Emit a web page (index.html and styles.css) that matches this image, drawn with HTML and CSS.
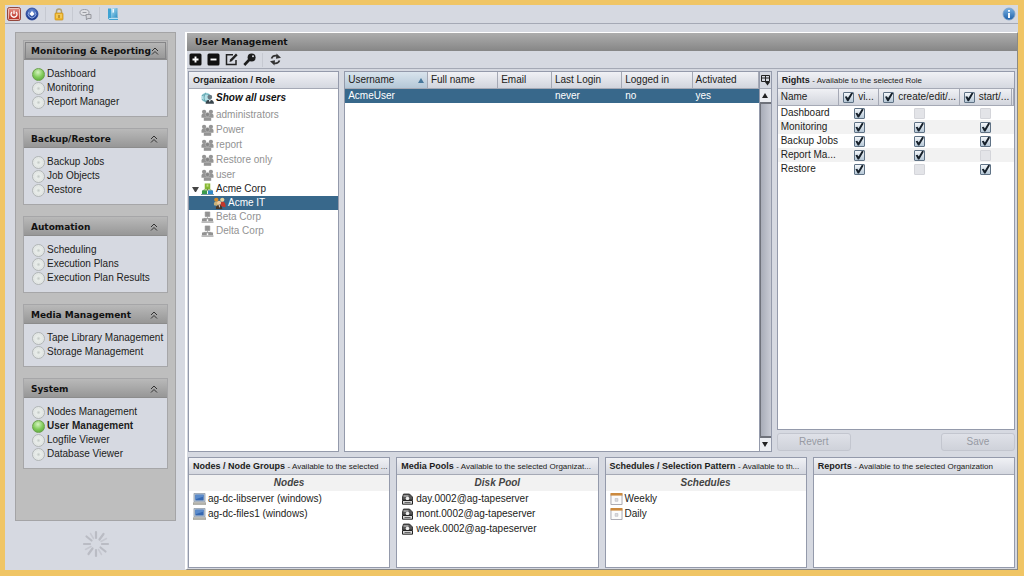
FILE: index.html
```html
<!DOCTYPE html>
<html lang="en">
<head>
<meta charset="utf-8">
<title>User Management</title>
<link rel="stylesheet" href="styles.css">
</head>
<body>
<svg class="defs" aria-hidden="true">
  <defs>
    <linearGradient id="g-red" x1="0" y1="0" x2="0" y2="1"><stop offset="0" stop-color="#e8958a"/><stop offset="1" stop-color="#b3271c"/></linearGradient>
    <radialGradient id="g-blue" cx=".5" cy=".3" r=".7"><stop offset="0" stop-color="#6f93dc"/><stop offset="1" stop-color="#0c2a80"/></radialGradient>
    <linearGradient id="g-info" x1="0" y1="0" x2="0" y2="1"><stop offset="0" stop-color="#79b2e4"/><stop offset="1" stop-color="#1d5fa8"/></linearGradient>
    <linearGradient id="g-book" x1="0" y1="0" x2="1" y2="1"><stop offset="0" stop-color="#b5e2f5"/><stop offset="1" stop-color="#2b8fc4"/></linearGradient>
  </defs>
  <symbol id="i-chevrons" viewBox="0 0 8 8"><path d="M1 4 4 1l3 3M1 7.500l3-3 3 3" fill="none" stroke="#333" stroke-width="1"/></symbol>
  <symbol id="i-group" viewBox="0 0 14 13"><g fill="#949494"><circle cx="3.300" cy="3" r="2.300"/><circle cx="10.700" cy="3" r="2.300"/><path d="M.5 9.500V6.600Q1 4.500 3.300 4.500h7.400q2.300 0 2.800 2.100v2.900z"/><path d="M3 12.800V9.500h8v3.300z"/></g><circle cx="7" cy="6" r="2.300" fill="#868686" stroke="#bdbdbd" stroke-width=".6"/></symbol>
  <symbol id="i-org" viewBox="0 0 14 13"><path d="M4.500 1h5v5h-5zM7 6v2M3 9V8h8v1" fill="currentColor" stroke="currentColor" stroke-width=".7"/><path d="M1 8.200h5.200V11H1zM7.800 8.200H13V11H7.800z" fill="currentColor"/><path d="M.5 12h13" stroke="currentColor" stroke-width="1.200"/></symbol>
  <symbol id="i-org-color" viewBox="0 0 14 13"><path d="M4 .5h6V6.500H4z" fill="#86b834"/><path d="M6 1.500h2v2.500H6z" fill="#c4dd83"/><path d="M7 6v2M3 9V7.500h8V9" stroke="#67922b" fill="none"/><path d="M1 8h5.500v4H1z" fill="#3c9b4c"/><path d="M7.500 8H13v4H7.500z" fill="#3187c8"/><path d="M0 12.500h14" stroke="#668c9a"/></symbol>
  <symbol id="i-pc" viewBox="0 0 14 13"><path d="M1 .5h12v9H1z" fill="#bfc9d3" stroke="#8a97a5" stroke-width=".8"/><path d="M2.500 1.800h9v6.300h-9z" fill="#3568b2"/><path d="M2.500 1.800h9v2l-9 3z" fill="#5b8bcb"/><path d="M0 10.500h14v2H0z" fill="#b9b8ae" stroke="#85857e" stroke-width=".5"/></symbol>
  <symbol id="i-disk" viewBox="0 0 12 12"><path d="M2 1h6l3 3v3H1V4z" fill="#555" stroke="#222" stroke-width=".8"/><path d="M2 3h5" stroke="#ddd"/><circle cx="6" cy="5.500" r="1.800" fill="#eee"/><path d="M1 7.500h10v3.700H1z" fill="#d7d7d7" stroke="#222" stroke-width="1"/><path d="M3 9.500h6" stroke="#666"/></symbol>
  <symbol id="i-cal" viewBox="0 0 13 13"><path d="M.5 1.500h12v11H.5z" fill="#fbfbfb" stroke="#a3a3ad"/><path d="M0 0h13v2.800H0z" fill="#cc8a3f"/><path d="M5 6h3v3H5z" fill="#ddd" stroke="#b4b4c0" stroke-width=".6"/></symbol>
</svg>
<div class="app">
  <header class="topbar">
    <button class="icon-btn" aria-label="Shut down"><svg viewBox="0 0 14 14"><rect x=".5" y=".5" width="13" height="13" rx="2" fill="url(#g-red)" stroke="#93473d"/><rect x="1.500" y="1.500" width="11" height="11" rx="1" fill="none" stroke="#f3cfc8" stroke-width=".8"/><path d="M5 5a3 3 0 1 0 4 0M7 3.500v3.500" fill="none" stroke="#fff" stroke-width="1.300"/></svg></button>
    <button class="icon-btn" aria-label="Log out"><svg viewBox="0 0 14 14"><circle cx="7" cy="7" r="6" fill="url(#g-blue)" stroke="#27459a" stroke-width=".8"/><path d="M4 4.800a3.800 3.800 0 1 0 6 0" fill="none" stroke="#93aee8"/><path d="M7 4 9.600 7 7 9.300 4.400 7z" fill="#fff"/></svg></button>
    <span class="sep"></span>
    <button class="icon-btn" aria-label="Lock"><svg viewBox="0 0 14 14"><path d="M4.500 7V4.500a2.500 2.500 0 0 1 5 0V7" fill="none" stroke="#b1a070" stroke-width="1.500"/><rect x="3" y="6" width="8" height="7" rx=".8" fill="#efb62c" stroke="#c98e17" stroke-width=".7"/><path d="M4 8h6M4 10h6" stroke="#f9d978"/><path d="M7 8v3" stroke="#8e6413"/></svg></button>
    <span class="sep"></span>
    <button class="icon-btn" aria-label="Messages"><svg viewBox="0 0 14 14"><ellipse cx="5.500" cy="5.500" rx="4.500" ry="3" fill="#dfe0e4" stroke="#9a9ca3"/><path d="M3.500 5.500h4" stroke="#9a9ca3"/><path d="M7 7.500h5v4H8.500L7.500 13z" fill="#d2d3d8" stroke="#96989f"/></svg></button>
    <span class="sep"></span>
    <button class="icon-btn" aria-label="Manual"><svg viewBox="0 0 14 14"><path d="M2 1.500h3v9h7v2.500H3.500L2 11.500z" fill="#3fa3d3"/><path d="M5 1.500 11.500 1v9.500H5z" fill="url(#g-book)"/><path d="M6.500 2h1.500v4l-.8-.8-.7.800z" fill="#eef9ff"/><path d="M3 11.500h9" stroke="#d8f0fa" stroke-width=".8"/></svg></button>
    <button class="icon-btn info" aria-label="Information"><svg viewBox="0 0 14 14"><circle cx="7" cy="7" r="6" fill="url(#g-info)" stroke="#7c9fc6" stroke-width=".8"/><path d="M7 6v5M7 3v1.800" stroke="#fff" stroke-width="1.900"/></svg></button>
  </header>

  <div class="workspace">
    <aside class="side">
      <nav class="menu" aria-label="Main">
        <section class="group">
          <button class="group-head focus">Monitoring &amp; Reporting<svg><use href="#i-chevrons"/></svg></button>
          <ul><li><a class="on" href="#">Dashboard</a></li><li><a href="#">Monitoring</a></li><li><a href="#">Report Manager</a></li></ul>
        </section>
        <section class="group">
          <button class="group-head">Backup/Restore<svg><use href="#i-chevrons"/></svg></button>
          <ul><li><a href="#">Backup Jobs</a></li><li><a href="#">Job Objects</a></li><li><a href="#">Restore</a></li></ul>
        </section>
        <section class="group">
          <button class="group-head">Automation<svg><use href="#i-chevrons"/></svg></button>
          <ul><li><a href="#">Scheduling</a></li><li><a href="#">Execution Plans</a></li><li><a href="#">Execution Plan Results</a></li></ul>
        </section>
        <section class="group">
          <button class="group-head">Media Management<svg><use href="#i-chevrons"/></svg></button>
          <ul><li><a href="#">Tape Library Management</a></li><li><a href="#">Storage Management</a></li></ul>
        </section>
        <section class="group">
          <button class="group-head">System<svg><use href="#i-chevrons"/></svg></button>
          <ul><li><a href="#">Nodes Management</a></li><li><a class="on current" href="#">User Management</a></li><li><a href="#">Logfile Viewer</a></li><li><a href="#">Database Viewer</a></li></ul>
        </section>
      </nav>
      <div class="busy"><svg viewBox="-14 -14 28 28" aria-hidden="true"><g stroke="#babcc4" stroke-width="2.200" stroke-linecap="round"><path d="M0-6v-6M0 6v6M6 0h6M-6 0h-6"/><path d="M3.500-4.500 7.500-10M-3.500 4.500-7.500 10M4.500 3.500l5 4M-4.500-3.500l-5-4"/><path d="M5-2.500l5.500-3M-5 2.500l-5.500 3M2.500 5.500l3 5M-2.500-5.500l-3-5" stroke="#c6c8d0" stroke-width="1.500"/></g></svg></div>
    </aside>

    <main class="main">
      <h1>User Management</h1>
      <div class="tools">
        <button class="tool" aria-label="Add"><svg viewBox="0 0 13 13"><rect x=".5" y=".5" width="12" height="12" rx="1.500" fill="#111"/><path d="M6.500 3.500v6M3.500 6.500h6" stroke="#fff" stroke-width="1.900"/></svg></button>
        <button class="tool" aria-label="Remove"><svg viewBox="0 0 13 13"><rect x=".5" y=".5" width="12" height="12" rx="1.500" fill="#111"/><path d="M3.500 6.500h6" stroke="#fff" stroke-width="1.900"/></svg></button>
        <button class="tool" aria-label="Edit"><svg viewBox="0 0 13 13"><path d="M8 1.800H1.500v9.700H11V7" fill="none" stroke="#222" stroke-width="1.500"/><path d="m4.500 9 .6-2.400L11 .6l1.600 1.600L6.800 8.300z" fill="#222"/></svg></button>
        <button class="tool" aria-label="Set password"><svg viewBox="0 0 13 13"><circle cx="8.600" cy="4.400" r="4" fill="#1c1c1c"/><circle cx="10" cy="3.200" r="1" fill="#d6d8e0"/><path d="M6.500 6.500 1.300 12" stroke="#1c1c1c" stroke-width="2.600"/></svg></button>
        <span class="sep"></span>
        <button class="tool" aria-label="Refresh"><svg viewBox="0 0 13 13"><path d="M2.500 5.500Q4 1.800 8.800 3M10.500 7.500Q9 11.200 4.200 10" fill="none" stroke="#333" stroke-width="1.700"/><path d="M7.500.5 12 4.800 7 5.800zM5.500 12.500 1 8.200l5-1z" fill="#333"/></svg></button>
      </div>

      <div class="panes">
        <div class="upper">
          <section class="panel">
            <h2>Organization / Role</h2>
            <a class="node all" href="#"><svg viewBox="0 0 14 13"><circle cx="5.500" cy="6" r="5.300" fill="#b5e0e6"/><path d="M1 4Q5 1 9 3M1 8q4 3 7 1M5 1Q1.500 6 5 11" stroke="#6aabb5" fill="none" stroke-width="1.200"/><circle cx="9.500" cy="5.500" r="2.600" fill="#687982"/><path d="M5 12.800q0-4.300 4.500-4.300t4.500 4.300z" fill="#38454c"/><path d="M8.500 8.700h2L9.500 11z" fill="#fff"/></svg>Show all users</a>
            <ul class="roles">
              <li><a class="node" href="#"><svg><use href="#i-group"/></svg>administrators</a></li>
              <li><a class="node" href="#"><svg><use href="#i-group"/></svg>Power</a></li>
              <li><a class="node" href="#"><svg><use href="#i-group"/></svg>report</a></li>
              <li><a class="node" href="#"><svg><use href="#i-group"/></svg>Restore only</a></li>
              <li><a class="node" href="#"><svg><use href="#i-group"/></svg>user</a></li>
            </ul>
            <ul class="orgs">
              <li><a class="node open" href="#"><svg><use href="#i-org-color"/></svg>Acme Corp</a>
                <ul><li><a class="node child selected" href="#"><svg viewBox="0 0 14 13"><circle cx="3.500" cy="3" r="2.300" fill="#d58b2a"/><path d="M1 9V7q0-2 2.500-2T6 7v3z" fill="#c9b27b"/><circle cx="10" cy="3" r="2.300" fill="#e8d39b"/><path d="M8 10V6.500Q9 5 11 5.200t2.500 3V11z" fill="#c2372b"/><circle cx="6.500" cy="6.300" r="2.200" fill="#f1c99a"/><path d="M3 13q0-4.300 3.500-4.300T10 13z" fill="#4a3728"/><path d="M6 9h1.500L7 12z" fill="#fff"/></svg>Acme IT</a></li></ul>
              </li>
              <li><a class="node" href="#"><svg><use href="#i-org"/></svg>Beta Corp</a></li>
              <li><a class="node" href="#"><svg><use href="#i-org"/></svg>Delta Corp</a></li>
            </ul>
          </section>

          <section class="panel users">
            <div class="grid">
              <table class="user-table">
                <colgroup><col class="u1"><col class="u2"><col class="u3"><col class="u4"><col class="u5"><col class="u6"></colgroup>
                <thead><tr><th class="sorted">Username</th><th>Full name</th><th>Email</th><th>Last Login</th><th>Logged in</th><th>Activated</th></tr></thead>
                <tbody><tr><td>AcmeUser</td><td></td><td></td><td>never</td><td>no</td><td>yes</td></tr></tbody>
              </table>
            </div>
            <div class="rail">
              <button class="columns" aria-label="Choose columns"><svg viewBox="0 0 11 14"><path d="M1.500 2.500h8v6h-8zM1.500 5h8M5.500 2.500v6" fill="none" stroke="#222"/><path d="M5 9h5l-2.500 3.500z" fill="#222"/></svg></button>
              <button class="arrow up" aria-label="Scroll up"></button>
              <div class="track"></div>
              <button class="arrow down" aria-label="Scroll down"></button>
            </div>
          </section>

          <div class="rights-col">
            <section class="panel rights">
              <h2>Rights <small>- Available to the selected Role</small></h2>
              <table class="rights-table">
                <colgroup><col class="r1"><col class="r2"><col class="r3"><col class="r4"><col class="r5"></colgroup>
                <thead><tr><th>Name</th><th><label><input type="checkbox" checked>vi...</label></th><th><label><input type="checkbox" checked>create/edit/...</label></th><th><label><input type="checkbox" checked>start/...</label></th><th></th></tr></thead>
                <tbody>
                  <tr><td>Dashboard</td><td><input type="checkbox" aria-label="Dashboard view" checked></td><td><input type="checkbox" aria-label="Dashboard create" disabled></td><td><input type="checkbox" aria-label="Dashboard start" disabled></td><td></td></tr>
                  <tr><td>Monitoring</td><td><input type="checkbox" aria-label="Monitoring view" checked></td><td><input type="checkbox" aria-label="Monitoring create" checked></td><td><input type="checkbox" aria-label="Monitoring start" checked></td><td></td></tr>
                  <tr><td>Backup Jobs</td><td><input type="checkbox" aria-label="Backup Jobs view" checked></td><td><input type="checkbox" aria-label="Backup Jobs create" checked></td><td><input type="checkbox" aria-label="Backup Jobs start" checked></td><td></td></tr>
                  <tr><td>Report Ma...</td><td><input type="checkbox" aria-label="Report view" checked></td><td><input type="checkbox" aria-label="Report create" checked></td><td><input type="checkbox" aria-label="Report start" disabled></td><td></td></tr>
                  <tr><td>Restore</td><td><input type="checkbox" aria-label="Restore view" checked></td><td><input type="checkbox" aria-label="Restore create" disabled></td><td><input type="checkbox" aria-label="Restore start" checked></td><td></td></tr>
                </tbody>
              </table>
            </section>
            <div class="actions"><button class="action" disabled>Revert</button><button class="action" disabled>Save</button></div>
          </div>
        </div>

        <div class="lower">
          <section class="panel">
            <h2>Nodes / Node Groups <small>- Available to the selected ...</small></h2>
            <h3>Nodes</h3>
            <ul class="items"><li><svg><use href="#i-pc"/></svg>ag-dc-libserver (windows)</li><li><svg><use href="#i-pc"/></svg>ag-dc-files1 (windows)</li></ul>
          </section>
          <section class="panel">
            <h2>Media Pools <small>- Available to the selected Organizat...</small></h2>
            <h3>Disk Pool</h3>
            <ul class="items"><li><svg><use href="#i-disk"/></svg>day.0002@ag-tapeserver</li><li><svg><use href="#i-disk"/></svg>mont.0002@ag-tapeserver</li><li><svg><use href="#i-disk"/></svg>week.0002@ag-tapeserver</li></ul>
          </section>
          <section class="panel">
            <h2>Schedules / Selection Pattern <small>- Available to th...</small></h2>
            <h3>Schedules</h3>
            <ul class="items"><li><svg><use href="#i-cal"/></svg>Weekly</li><li><svg><use href="#i-cal"/></svg>Daily</li></ul>
          </section>
          <section class="panel">
            <h2>Reports <small>- Available to the selected Organization</small></h2>
          </section>
        </div>
      </div>
    </main>
  </div>
</div>
</body>
</html>
```

FILE: styles.css
```css
*, *::before, *::after { box-sizing: border-box; }

body {
  margin: 0;
  background: #f0c565;
  color: #1c1c20;
  font: 10px/14px "Liberation Sans", Arial, sans-serif;
}

h1, h2, h3, ul { margin: 0; padding: 0; }
ul { list-style: none; }
a { color: inherit; text-decoration: none; }
button { font: inherit; color: inherit; margin: 0; padding: 0; border: 0; background: none; }
svg { display: block; flex: none; }
.defs { position: absolute; width: 0; height: 0; }

.app {
  display: flex;
  flex-direction: column;
  height: 100vh;
  border: solid #f0c565;
  border-width: 5px 6px 6px 5px;
  background: #d6d9e1;
}

/* Top toolbar */
.topbar {
  display: flex;
  align-items: center;
  gap: 4px;
  height: 19px;
  padding: 0 2px;
  border-bottom: 1px solid #a5a9b5;
}
.icon-btn svg { width: 14px; height: 14px; }
.icon-btn.info { margin-left: auto; }
.sep { width: 1px; height: 14px; margin: 0 2px; background: #c6c9d1; }

.workspace { display: flex; flex: 1; min-height: 0; gap: 9px; padding: 8px 0 0 10px; }

/* Side menu */
.side { display: flex; flex-direction: column; width: 161px; }
.menu {
  display: flex;
  flex-direction: column;
  flex: 1;
  gap: 11px;
  padding: 7px;
  border: 1px solid #a4a4a6;
  background: #bebebe;
}
.group { border: 1px solid #a6a6a8; background: #d6d9e1; }
.group-head {
  display: flex;
  align-items: center;
  justify-content: space-between;
  width: 100%;
  height: 19px;
  padding: 1px 9px 0 7px;
  border-bottom: 1px solid #8c8c8c;
  background: linear-gradient(#b9b9b9, #979797);
  color: #111;
  font: bold 9px/14px "DejaVu Sans", Verdana, sans-serif;
  white-space: nowrap;
}
.group-head.focus { outline: 1px solid #858587; outline-offset: -2px; }
.group-head svg { width: 8px; height: 8px; }
.group ul { padding: 7px 0 7px 8px; }
.group li a { display: flex; align-items: center; gap: 2px; white-space: nowrap; }
.group li a::before {
  content: "";
  width: 13px;
  height: 13px;
  border: 1px solid #b1b6b6;
  border-radius: 50%;
  background: radial-gradient(circle at 50% 50%, #c3c9c6 0, #e9edea 30%, #e1e5e3 60%, #f5f7f6 100%);
}
.group li a.on::before {
  border-color: #6ba04d;
  background: radial-gradient(circle at 45% 30%, #d5f3c0 0, #82cc5b 50%, #4e9f32 100%);
}
.group li a.current { font-weight: bold; }
.busy { display: flex; justify-content: center; height: 49px; padding-top: 9px; }
.busy svg { width: 28px; height: 28px; }

/* Main window */
.main {
  display: flex;
  flex-direction: column;
  flex: 1;
  min-width: 0;
  border: 1px solid #fff;
  border-left-width: 2px;
  border-right-color: #8b8a85;
  border-bottom-color: #8b8a85;
}
.main h1 {
  padding: 2px 8px;
  background: linear-gradient(#adadad, #868686);
  color: #111;
  font: bold 9px/14px "DejaVu Sans", Verdana, sans-serif;
}
.tools {
  display: flex;
  align-items: center;
  gap: 5px;
  height: 18px;
  padding: 0 2px;
  border-bottom: 1px solid #a5a9b5;
}
.tools .sep { margin: 0 1px; }
.tool svg { width: 13px; height: 13px; }
.panes { display: grid; grid-template-rows: 381fr 111fr; gap: 5px; flex: 1; min-height: 0; padding: 2px 2px 1px 1px; }
.upper { display: grid; grid-template-columns: 151fr 427fr 238fr; gap: 5px; min-height: 0; }
.lower { display: grid; grid-template-columns: repeat(4, 1fr); gap: 6px; min-height: 0; }

.panel { min-width: 0; overflow: hidden; border: 1px solid #949aab; background: #fff; }
.panel h2 {
  height: 17px;
  padding: 0 4px;
  overflow: hidden;
  border-bottom: 1px solid #a5a9b5;
  background: linear-gradient(#f0f1f5, #d5d8e0);
  font-size: 9px;
  line-height: 17px;
  white-space: nowrap;
}
.panel small { font-size: 8px; font-weight: normal; }
.panel h3 { background: #f2f2f2; color: #444; font-size: 10px; font-style: italic; line-height: 16px; text-align: center; }
.items li { display: flex; align-items: center; gap: 2px; height: 15px; padding-left: 4px; white-space: nowrap; }
.items svg { width: 13px; height: 12px; }

/* Organization tree */
.node { display: flex; align-items: center; gap: 2px; height: 14px; padding-left: 12px; color: #929292; white-space: nowrap; }
.node svg { width: 13px; height: 12px; }
.roles .node { height: 15px; }
.node.all { height: 18px; color: #111; font-weight: bold; font-style: italic; }
.node.open { padding-left: 3px; gap: 2px; color: #222; }
.node.open::before { content: ""; width: 7px; border: solid transparent; border-width: 5px 3px 0; border-top-color: #444; }
.node.child { padding-left: 24px; }
.node.selected { background: #38688b; color: #fff; }

/* Users table */
.users { display: flex; }
.grid { flex: 1; min-width: 0; }
table { width: 100%; border-collapse: separate; border-spacing: 0; table-layout: fixed; }
th, td { overflow: hidden; padding: 0 3px; font-weight: normal; text-align: left; white-space: nowrap; }
th { height: 17px; border-right: 1px solid #a5a9b5; border-bottom: 1px solid #a5a9b5; background: linear-gradient(#f0f1f5, #d2d5dd); }
.u1 { width: 20%; }
.u2 { width: 17%; }
.u3 { width: 13%; }
.u4 { width: 17%; }
.u5 { width: 17%; }
.u6 { width: 16%; }
.sorted { background: linear-gradient(#d9e4ed, #b4c7d7); }
.sorted::after { content: ""; float: right; margin: 5px 0; border: solid transparent; border-width: 0 3px 5px; border-bottom-color: #47779b; }
.user-table tbody td { height: 14px; background: #38688b; color: #fff; }

.rail { display: flex; flex-direction: column; width: 12px; border-left: 1px solid #949aab; background: #d6d9e1; }
.columns { height: 17px; border-bottom: 1px solid #a5a9b5; }
.columns svg { width: 11px; height: 14px; }
.arrow { display: flex; align-items: center; justify-content: center; height: 13px; background: #eceef2; }
.arrow::before { content: ""; border: solid transparent; }
.arrow.up::before { border-width: 0 3px 5px; border-bottom-color: #222; }
.arrow.down::before { border-width: 5px 3px 0; border-top-color: #222; }
.track {
  flex: 1;
  border: solid #6f727a;
  border-width: 2px 0 2px 1px;
  background: linear-gradient(90deg, #a9adb8, #c9ccd5);
}

/* Rights */
.rights-col { display: flex; flex-direction: column; gap: 3px; min-width: 0; }
.rights { flex: 1; }
.r1 { width: 26%; }
.r2 { width: 17%; }
.r3 { width: 34%; }
.r4 { width: 22%; }
.r5 { width: 1%; }
.rights-table th:last-child, .rights-table td:last-child { padding: 0; }
.rights-table td { height: 14px; }
.rights-table th + th { padding: 0 4px; }
.rights-table td + td { padding: 0; line-height: 12px; text-align: center; }
.rights-table tbody tr:nth-child(even) { background: #f2f2f2; }
label { display: flex; align-items: center; gap: 4px; }

input[type="checkbox"] {
  display: inline-flex;
  flex: none;
  appearance: none;
  width: 11px;
  height: 11px;
  margin: 0;
  border: 1px solid #5f7285;
  border-radius: 1px;
  background: linear-gradient(#f4f7fa, #b5c7d6);
  vertical-align: middle;
}
input[type="checkbox"]:checked::before {
  content: "";
  width: 9px;
  height: 9px;
  background: #16202a;
  clip-path: polygon(8% 48%, 28% 42%, 42% 62%, 80% 0, 100% 6%, 48% 96%, 34% 96%);
}
input[type="checkbox"]:disabled { border-color: #d4d5da; background: #e3e4e8; }

.actions { display: flex; justify-content: space-between; padding-bottom: 1px; }
.action {
  width: 74px;
  height: 18px;
  border: 1px solid #c3c6cf;
  border-radius: 3px;
  background: linear-gradient(#dfe1e8, #cfd2da);
  color: #979aa3;
}
```
